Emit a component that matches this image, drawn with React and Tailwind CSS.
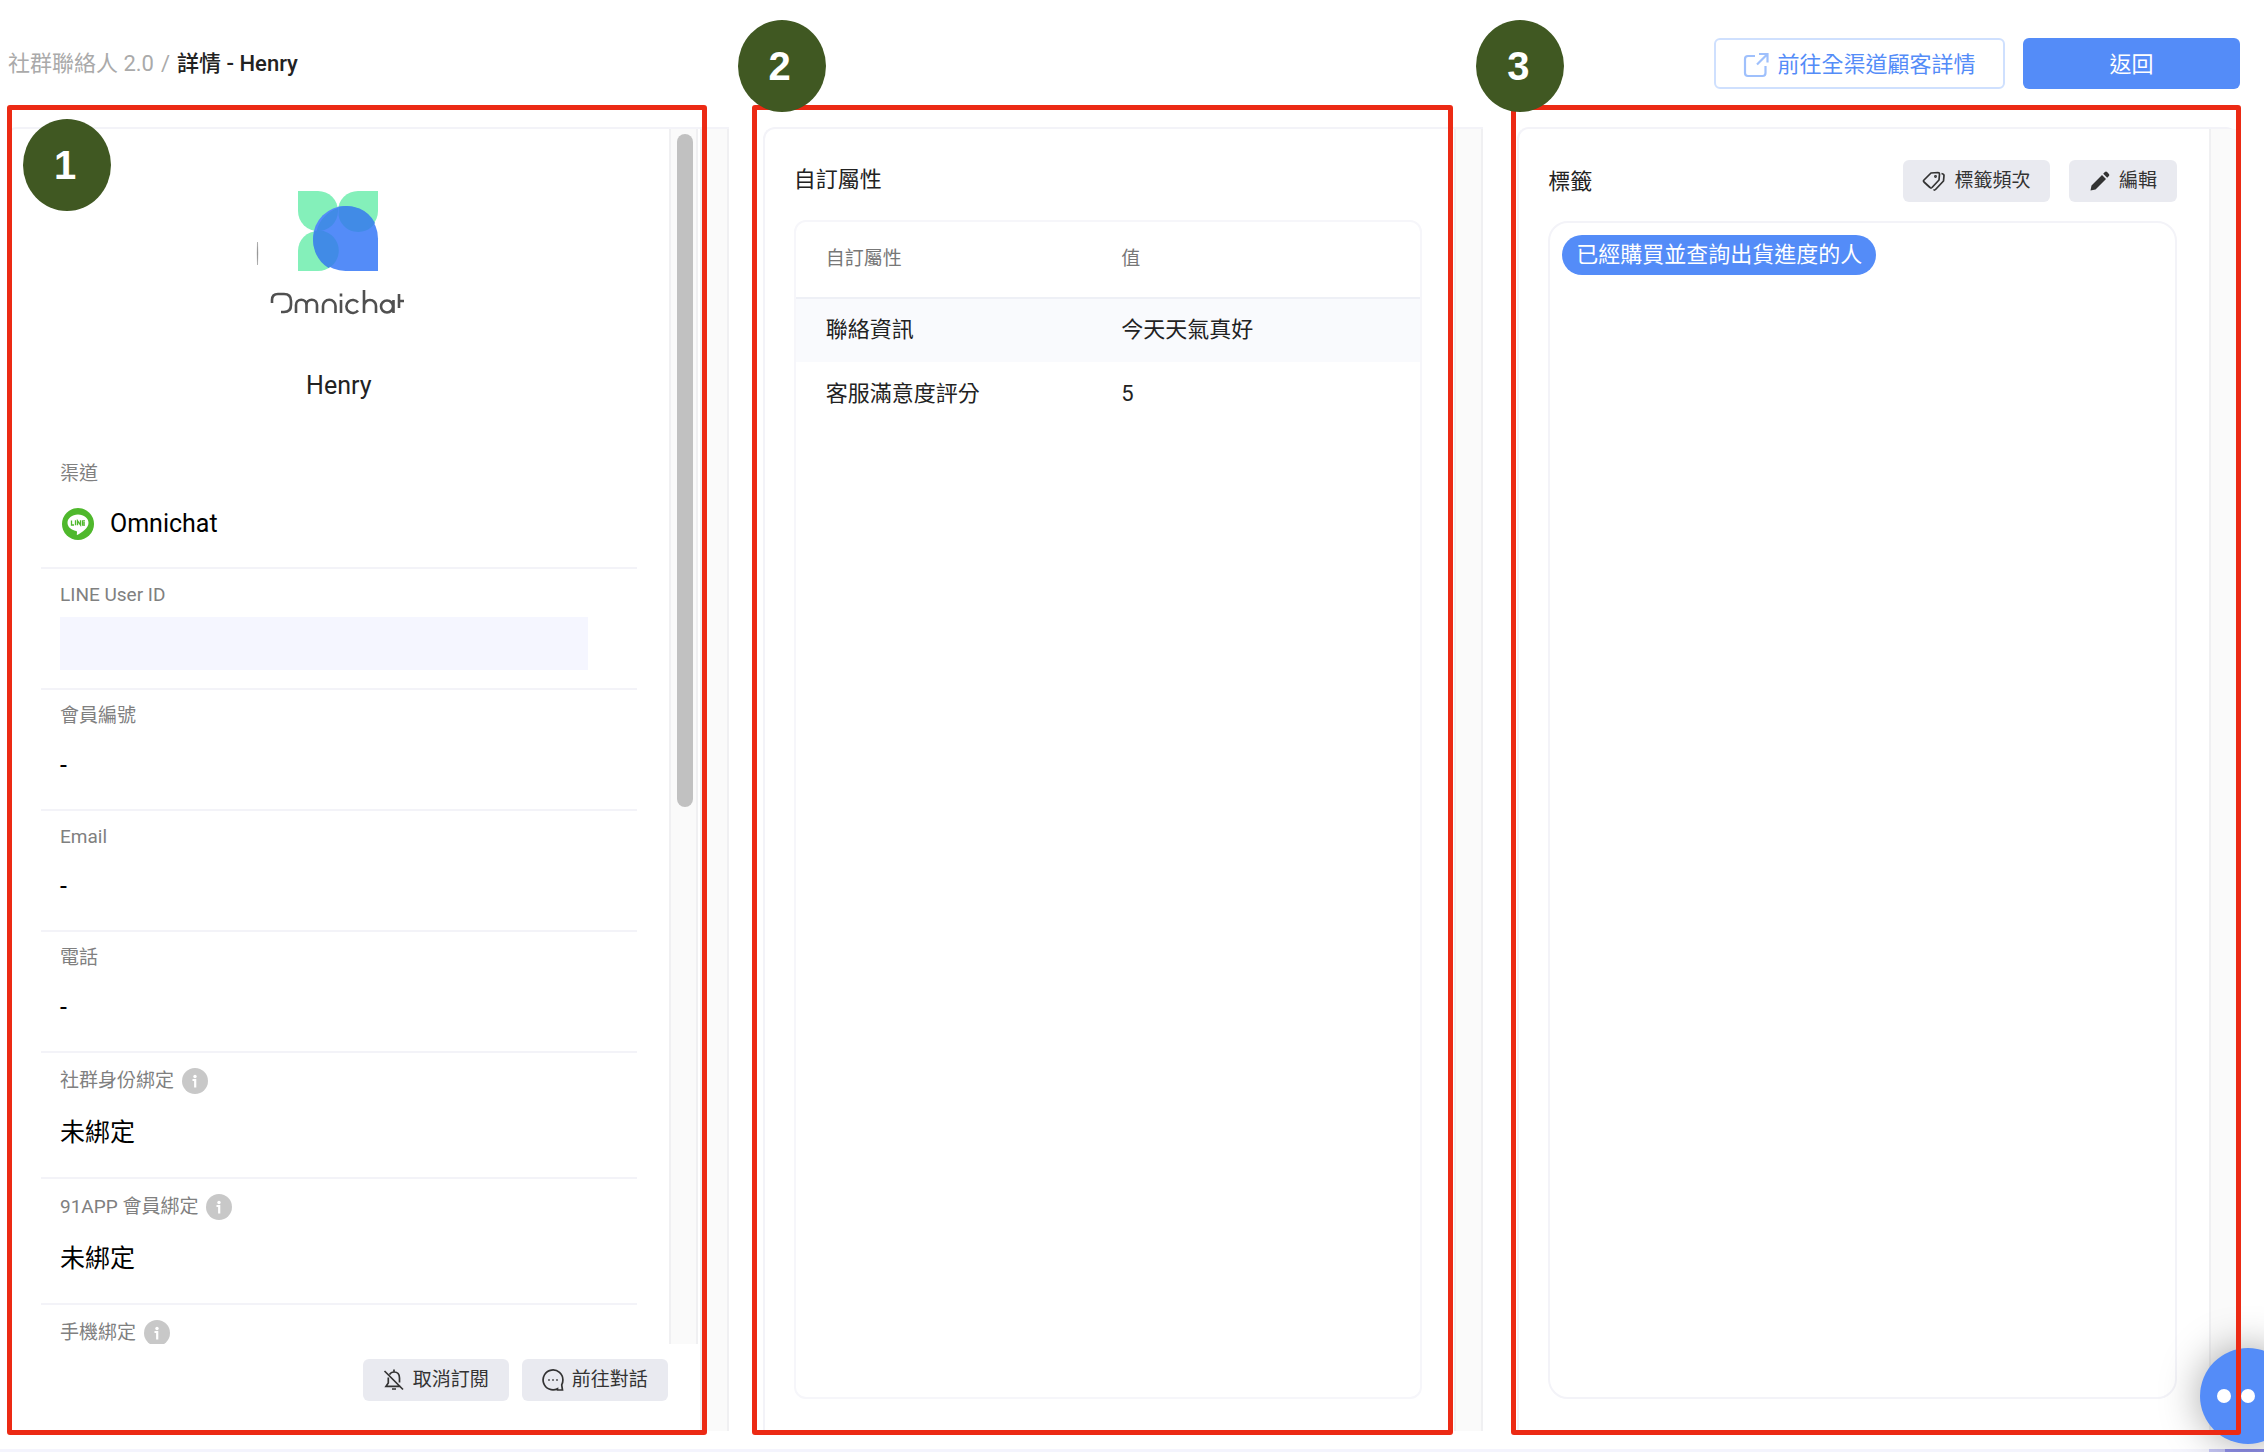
const FONT = "font-['Roboto','Noto_Sans_CJK_TC',sans-serif]";

function Badge({ n, className }) {
  return (
    <span
      className={`absolute z-20 flex h-[92px] w-[88px] items-center justify-center rounded-[50%] bg-[#405822] pr-1 font-['Liberation_Sans',sans-serif] text-[40px] font-bold text-white ${className}`}
    >
      {n}
    </span>
  );
}

function Outline({ className }) {
  return (
    <div
      aria-hidden="true"
      className={`pointer-events-none absolute -top-[22px] -bottom-1 z-10 rounded-[3px] border-[5px] border-[#ec2a14] ${className}`}
    />
  );
}

function OmnichatLogo() {
  return (
    <svg viewBox="0 0 200 160" className="h-40 w-[200px]" role="img" aria-label="Omnichat">
      <path d="M18.500 71Q19.300 82 18.500 94Q17.800 82 18.500 71Z" fill="#888" stroke="#888" strokeWidth=".4" />
      <g fill="#84f0ba">
        <path d="M59 20h20a20 20 0 1 1-20 20z" />
        <path d="M139 20v20a20 20 0 1 1-20-20z" />
        <path d="M59 100V80a20 20 0 1 1 20 20z" />
      </g>
      <path d="M139 100V67.500a32.500 32.500 0 1 0-32.500 32.500z" fill="#548cf8" />
      <g fill="#418be6">
        <path d="M99.500 36a32 32 0 0 1 36.500 16a20 20 0 0 1-36.500-8z" />
        <path d="M75.500 60a20 20 0 0 1 14 37a32.500 32.500 0 0 1-14-37z" />
        <path d="M99 37v3a20 20 0 0 1-21.500 20a32.500 32.500 0 0 1 21.500-23z" />
      </g>
      <g fill="none" stroke="#505050" strokeWidth="2.600">
        <path d="M33 132v-3q0-6 6-6h6q7 0 7 7v4q0 7-7 7h-3" />
        <path d="M57 142v-8a5.200 5.200 0 0 1 10.500 0v8M67.500 134a5.200 5.200 0 0 1 10.500 0v8" />
        <path d="M84 142v-7a6 6 0 0 1 12.500 0v7M102 129v13M102 122.500v3" />
        <path d="M119 131.500a6.500 6.500 0 1 0 0 8" />
        <path d="M125 119v23M125 135a5.500 5.500 0 0 1 12 0v7" />
        <path d="M154 135.500a6 6 0 1 0-12 0a6 6 0 0 0 12 0M154.500 129v13" />
        <path d="M160 123v14M160 130h5" />
      </g>
    </svg>
  );
}

function LineIcon() {
  return (
    <svg viewBox="0 0 32 32" className="size-8" aria-hidden="true">
      <circle cx="16" cy="16" r="16" fill="#4fb82c" />
      <path d="M16 6.500c-6 0-10.500 3.700-10.500 8.300 0 4 3.600 7.400 8.600 8.100.8.200 1 .6.900 1.300l-.2 2.200c0 .6.400.7.900.4 4.500-2.500 10.800-6.700 10.800-12C26.500 10.200 22 6.500 16 6.500z" fill="#fff" />
      <path d="M9.500 12.500v4.500h2.500M13.500 12.300v5M15.500 17.300v-4.500l3 4.200v-4.700M23 12.800h-2.500v4.200H23M20.500 15H23" fill="none" stroke="#4fb82c" strokeWidth="1.300" />
    </svg>
  );
}

function InfoIcon() {
  return (
    <svg viewBox="0 0 26 26" className="size-[26px]" aria-hidden="true">
      <circle cx="13" cy="13" r="13" fill="#c8c8c8" />
      <circle cx="13" cy="8.500" r="1.700" fill="#fff" />
      <path d="M10.500 12h2.700v7.500" fill="none" stroke="#fff" strokeWidth="2.200" />
    </svg>
  );
}

function BellOffIcon() {
  return (
    <svg viewBox="0 0 22 22" className="size-[22px]" fill="none" stroke="currentColor" strokeWidth="1.700" aria-hidden="true">
      <path d="M11 .5v2M6.500 5.500Q8 3 11 3Q16.500 3 16.500 9v4.500M5.300 8.500V14L3 17.300h14.500M9 20h4M1.500 2l18.500 18.500" />
    </svg>
  );
}

function ChatIcon() {
  return (
    <svg viewBox="0 0 22 22" className="size-[22px]" fill="none" stroke="currentColor" strokeWidth="1.700" aria-hidden="true">
      <path d="M15.500 19.700A9.900 9.900 0 1 1 20.900 11q0 2.700-1.200 4.800l.8 5.200h-5z" />
      <path d="M6.200 11h1.600M10.200 11h1.600M14.200 11h1.600" />
    </svg>
  );
}

function TagsIcon() {
  return (
    <svg viewBox="0 0 24 22" className="h-[22px] w-6" fill="none" stroke="currentColor" strokeWidth="1.700" strokeLinejoin="round" aria-hidden="true">
      <path d="M9 3l7-.5q1.500 0 1.500 1.500L17 10l-7 7.500q-1 1-2 0L2 12q-1-1 0-2z" />
      <path d="M19.500 3.500q2.500.5 2.500 2L21.500 11l-8 8.500q-1 1-2 0" />
      <circle cx="13.500" cy="6.500" r=".6" />
    </svg>
  );
}

function PencilIcon() {
  return (
    <svg viewBox="0 0 22 22" className="size-[22px]" fill="currentColor" aria-hidden="true">
      <path d="M1.500 20.500l1-5L13 5l4 4L6.500 19.500zM14.200 3.800l1.700-1.700q1.100-1 2.200 0l1.800 1.800q1 1.100 0 2.200l-1.700 1.700z" />
    </svg>
  );
}

function ExternalIcon() {
  return (
    <svg viewBox="0 0 26 26" className="size-[26px]" fill="none" stroke="#9fc0fc" strokeWidth="2.200" aria-hidden="true">
      <path d="M12 4H5Q2 4 2 7v14q0 3 3 3h14.500q3 0 3-3v-7M16 2h8.500v8.500M24 2.500L14 12.500" />
    </svg>
  );
}

function GreyButton({ icon, children, className }) {
  return (
    <button
      type="button"
      className={`flex h-[42px] items-center justify-center gap-2 rounded-md bg-[#e9eaf0] text-[19px] text-[#333] ${className}`}
    >
      {icon}
      {children}
    </button>
  );
}

function Track({ className = "" }) {
  return <div className={`w-[29px] shrink-0 border-x-2 border-[#f0f0f2] bg-[#fafafa] ${className}`} />;
}

function Field({ label, info, children, first }) {
  const size = first ? "h-[107px]" : info ? "h-[126px] border-t-2 pt-3" : "h-[121px] border-t-2 pt-3";
  return (
    <div className={`flex shrink-0 flex-col gap-[18px] border-[#f3f3f8] px-[19px] ${size}`}>
      <dt className={`flex items-center gap-2 text-[19px] text-[#808080] ${info ? "h-8" : "h-7"}`}>
        {label}
        {info && <InfoIcon />}
      </dt>
      {children && <dd className="flex h-9 items-center text-[25px] text-black">{children}</dd>}
    </div>
  );
}

const attributes = [
  ["聯絡資訊", "今天天氣真好"],
  ["客服滿意度評分", "5"],
];

export default function App() {
  return (
    <div className={`flex min-h-screen flex-col overflow-hidden bg-white text-[#222] ${FONT}`}>
      <header className="flex h-[127px] items-start justify-between pt-[38px] pr-6 pl-2">
        <nav aria-label="breadcrumb" className="flex h-[50px] items-center gap-[7px] text-[22px] font-medium">
          <a href="#contacts" className="font-normal text-[#aaa]">社群聯絡人 2.0</a>
          <span className="font-normal text-[#aaa]">/</span>
          <span>詳情 - Henry</span>
        </nav>
        <div className="flex gap-[18px] text-[22px]">
          <button type="button" className="flex h-[51px] w-[291px] items-center justify-center gap-2 rounded-md border-2 border-[#cfe0fe] pt-0.5 text-[#548cf8]">
            <ExternalIcon />
            前往全渠道顧客詳情
          </button>
          <button type="button" className="h-[51px] w-[217px] rounded-md bg-[#548cf8] pt-0.5 text-white">返回</button>
        </div>
      </header>

      <main className="grid flex-1 grid-cols-3 gap-[34px] pr-[26px] pl-2">
        <section className="relative h-[1304px]">
          <Outline className="-left-px right-[22px]" />
          <Badge n="1" className="-top-2 left-[15px]" />
          <div className="flex h-full rounded-tl-lg border-t-2 border-l-2 border-[#f3f3f8]">
            <div className="flex min-w-0 flex-1 flex-col">
              <div className="flex h-[1215px]">
                <div className="flex flex-1 flex-col overflow-hidden pr-8 pl-[31px]">
                  <div className="flex h-[331px] shrink-0 flex-col items-center pt-[42px]">
                    <OmnichatLogo />
                    <h1 className="mt-9 text-[25px] leading-[38px] text-[#222]">Henry</h1>
                  </div>
                  <dl className="flex flex-col">
                    <Field label="渠道" first>
                      <span className="ml-0.5"><LineIcon /></span>
                      <span className="ml-4">Omnichat</span>
                    </Field>
                    <div className="h-[121px] border-t-2 border-[#f3f3f8] px-[19px] pt-3">
                      <dt className="h-7 text-[19px] leading-7 text-[#808080]">LINE User ID</dt>
                      <dd className="mt-2 mr-[30px] h-[53px] bg-[#f5f6ff]" />
                    </div>
                    <Field label="會員編號">-</Field>
                    <Field label="Email">-</Field>
                    <Field label="電話">-</Field>
                    <Field label="社群身份綁定" info>未綁定</Field>
                    <Field label="91APP 會員綁定" info>未綁定</Field>
                    <Field label="手機綁定" info />
                  </dl>
                </div>
                <Track className="mr-0.5" />
              </div>
              <div className="flex justify-end gap-[13px] pt-[15px] pr-8">
                <GreyButton icon={<BellOffIcon />} className="w-[146px]">取消訂閱</GreyButton>
                <GreyButton icon={<ChatIcon />} className="w-[146px]">前往對話</GreyButton>
              </div>
            </div>
            <Track />
          </div>
          <div className="absolute top-[7px] right-9 h-[673px] w-4 rounded-full bg-[#c1c1c1]" />
        </section>

        <section className="relative h-[1304px]">
          <Outline className="-left-[11px] right-[30px]" />
          <Badge n="2" className="-top-[107px] -left-[25px]" />
          <div className="flex h-full rounded-tl-xl border-t-2 border-l-2 border-[#f3f3f8]">
            <div className="flex flex-1 flex-col pr-8 pb-8 pl-[29px]">
              <h2 className="flex h-[91px] items-center pt-2.5 text-[22px]">自訂屬性</h2>
              <div className="flex-1 overflow-hidden rounded-xl border-2 border-[#f6f6fa]">
                <table className="w-full table-fixed border-collapse text-left">
                  <thead>
                    <tr className="h-[76px] border-b-2 border-[#eef0f6] text-[19px] text-[#777]">
                      <th className="w-[47%] pl-[30px] font-normal">自訂屬性</th>
                      <th className="pl-8 font-normal">值</th>
                    </tr>
                  </thead>
                  <tbody>
                    {attributes.map(([name, value]) => (
                      <tr key={name} className="h-16 text-[22px] odd:bg-[#f9fafd]">
                        <td className="pb-0.5 pl-[30px]">{name}</td>
                        <td className="pb-0.5 pl-8">{value}</td>
                      </tr>
                    ))}
                  </tbody>
                </table>
              </div>
            </div>
            <Track />
          </div>
        </section>

        <section className="relative h-[1304px]">
          <Outline className="-left-[6px] -right-[3px]" />
          <Badge n="3" className="-top-[107px] -left-[41px]" />
          <div className="flex h-full rounded-t-xl border-t-2 border-l-2 border-[#f3f3f8]">
            <div className="flex flex-1 flex-col pr-8 pb-8 pl-[29px]">
              <div className="flex h-[92px] items-center gap-[19px] pt-3">
                <h2 className="mr-auto text-[22px]">標籤</h2>
                <GreyButton icon={<TagsIcon />} className="w-[147px]">標籤頻次</GreyButton>
                <GreyButton icon={<PencilIcon />} className="w-[108px]">編輯</GreyButton>
              </div>
              <div className="flex-1 rounded-[20px] border-2 border-[#f3f3f8] px-3 pt-3">
                <span className="inline-flex h-10 items-center rounded-full bg-[#548cf8] px-3.5 pb-0.5 text-[22px] text-white">
                  已經購買並查詢出貨進度的人
                </span>
              </div>
            </div>
            <Track />
          </div>
        </section>
      </main>
      <footer className="flex h-[3px] justify-end bg-[#f4f4fd]">
        <span className="w-4 bg-[#c5c5f5]" />
        <span className="w-[39px] bg-[#8f8fe8]" />
      </footer>

      <button
        type="button"
        aria-label="Chat"
        className="fixed -right-8 bottom-2 flex size-24 items-center justify-center gap-2.5 rounded-full bg-[#548cf8] shadow-[0_0_40px_rgba(0,0,0,0.35)]"
      >
        <span className="size-3.5 rounded-full bg-white" />
        <span className="size-3.5 rounded-full bg-white" />
        <span className="size-3.5 rounded-full bg-white" />
      </button>
    </div>
  );
}
